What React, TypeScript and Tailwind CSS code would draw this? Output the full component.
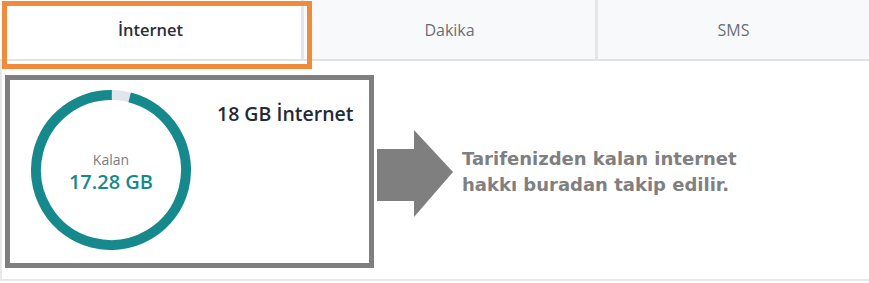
import React from "react";

const UI_FONT = "font-['Open_Sans','Lato',sans-serif]";

function Donut({ used, total }: { used: number; total: number }) {
  const r = 75;
  const c = 2 * Math.PI * r;
  const pct = used / total;
  const gap = 360 * (1 - pct);
  return (
    <svg width="160" height="160" viewBox="0 0 160 160" className="absolute inset-0">
      <circle cx="80" cy="80" r={r} fill="none" stroke="#e1e5ec" strokeWidth="10" />
      <circle
        cx="80"
        cy="80"
        r={r}
        fill="none"
        stroke="#15898b"
        strokeWidth="10"
        strokeDasharray={`${c * pct} ${c}`}
        transform={`rotate(${-90 + gap} 80 80)`}
      />
    </svg>
  );
}

export default function App() {
  const tabs = ["İnternet", "Dakika", "SMS"];

  return (
    <div className={`relative w-[869px] h-[283px] bg-white overflow-hidden ${UI_FONT}`}>
      {/* Tabs */}
      <div className="flex h-[61px] border-b-2 border-[#dfe2e6] bg-[#f8f9fb]">
        {tabs.map((t, i) => (
          <div
            key={t}
            className={`flex items-center justify-center pt-[1px] ${
              i === 0
                ? "w-[304px] bg-white border-r-[3px] border-[#e3e6ea] text-[16.5px] font-semibold text-[#2a2f38]"
                : i === 1
                  ? "w-[294px] border-r-[3px] border-[#e3e6ea] text-[16px] text-[#6b6f75]"
                  : "flex-1 text-[16px] text-[#6b6f75]"
            }`}
          >
            {t}
          </div>
        ))}
      </div>

      {/* Content */}
      <div className="flex h-[220px] border-l-2 border-b-2 border-[#e6e8eb]">
        <div className="relative ml-[29px] mt-[29px] w-[160px] h-[160px]">
          <Donut used={17.28} total={18} />
          <div className="absolute inset-0 flex flex-col items-center justify-center gap-[1px] pt-[4px]">
            <span className="text-[14px] leading-[18px] text-[#7a7d82]">Kalan</span>
            <span className="text-[20px] leading-[23px] font-semibold text-[#15898b]">17.28 GB</span>
          </div>
        </div>
        <div className="ml-[26px] mt-[40px] text-[19.5px] font-semibold text-[#222a36] leading-[26px]">
          18 GB İnternet
        </div>
      </div>

      {/* Annotations */}
      <div className="absolute left-[2px] top-[1px] w-[310px] h-[68px] border-[5px] border-[#ef8b3b]" />
      <div className="absolute left-[5px] top-[75px] w-[369px] h-[193px] border-[5px] border-[#7f7f7f]" />
      <svg className="absolute left-[377px] top-[129px]" width="80" height="90" viewBox="0 0 80 90">
        <polygon points="0,20 37,20 37,1 76,43 37,88 37,72 0,72" fill="#7f7f7f" />
      </svg>
      <div className="absolute left-[462px] top-[146px] font-['DejaVu_Sans',sans-serif] font-bold text-[18px] leading-[26px] text-[#808080]">
        Tarifenizden kalan internet
        <br />
        hakkı buradan takip edilir.
      </div>
    </div>
  );
}
